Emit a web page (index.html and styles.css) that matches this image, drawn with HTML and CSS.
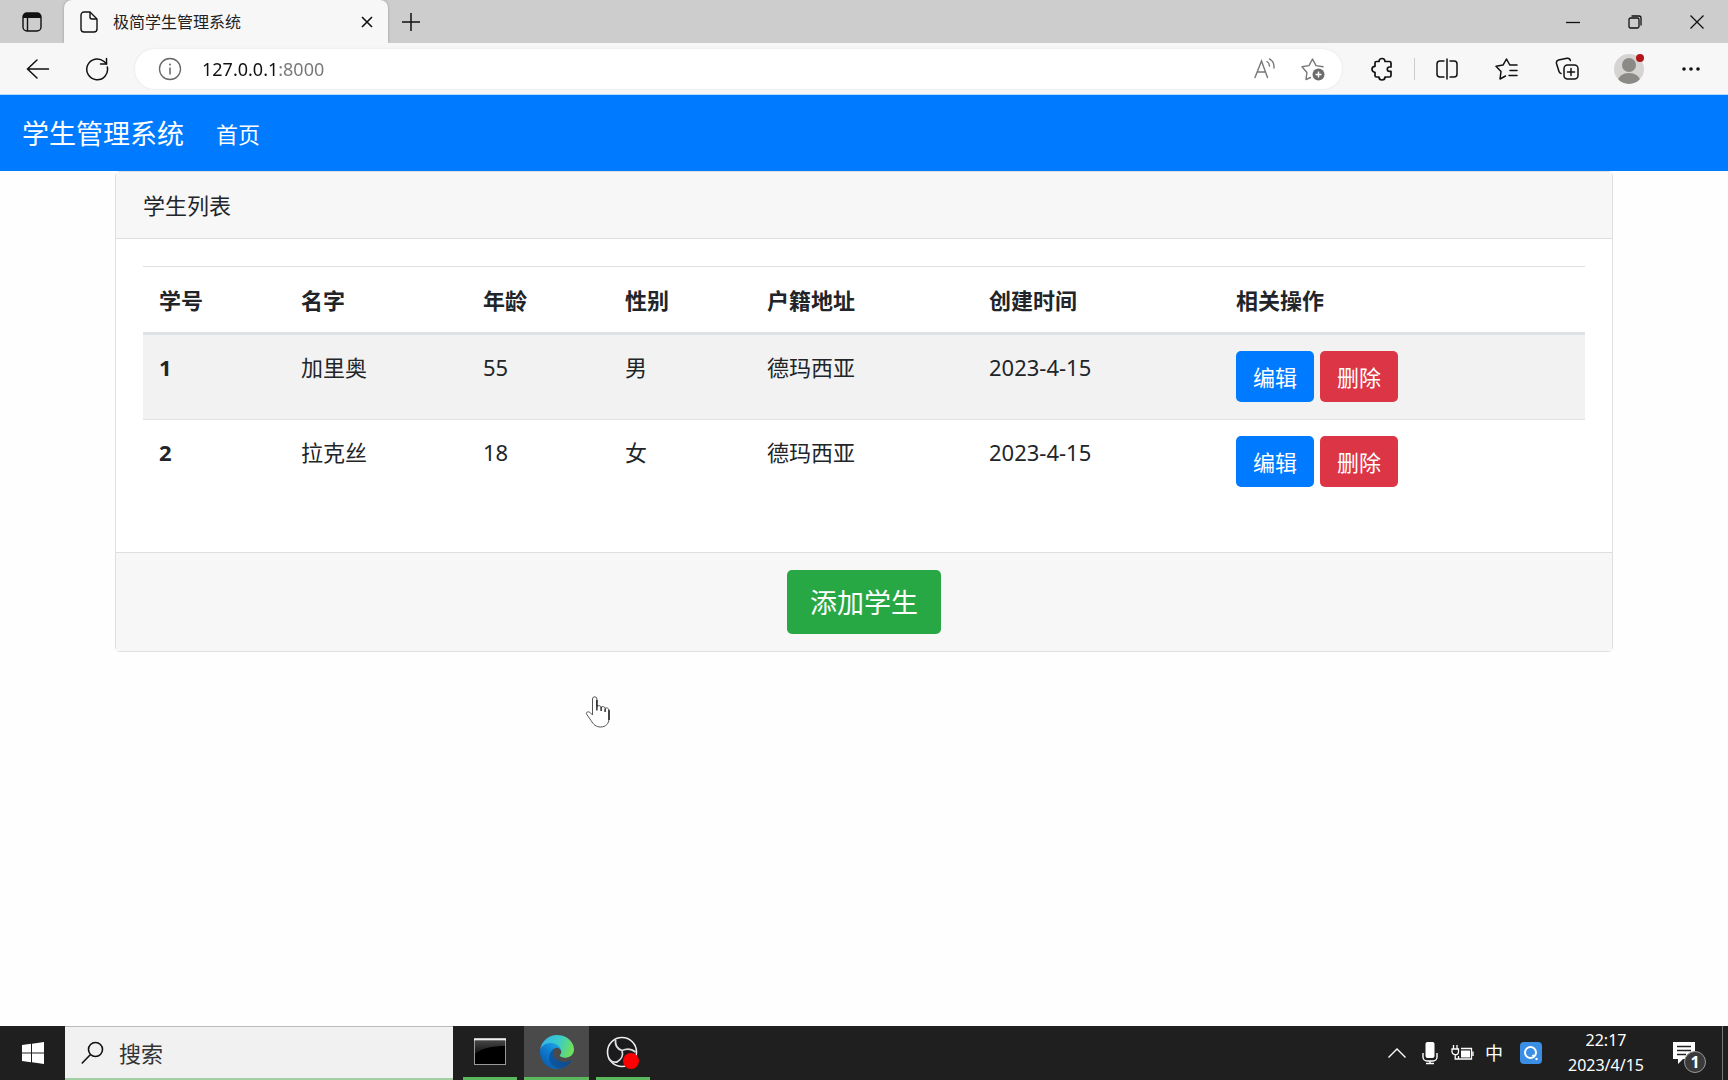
FILE: index.html
```html
<!DOCTYPE html>
<html lang="zh-CN">
<head>
<meta charset="utf-8">
<meta name="viewport" content="width=device-width, initial-scale=1">
<title>极简学生管理系统</title>
<link rel="stylesheet" href="styles.css">
</head>
<body>
<div class="tabstrip">
  <button class="tab-menu" aria-label="标签操作">
    <svg width="20" height="20" viewBox="0 0 20 20"><rect x="1" y="1" width="18" height="18" rx="4" fill="none" stroke="#111" stroke-width="1.4"/><path d="M1 6V5a4 4 0 0 1 4-4h10a4 4 0 0 1 4 4v1z" fill="#111"/><path d="M5.500 6v13" stroke="#111" stroke-width="1.400"/></svg>
  </button>
  <div class="tab">
    <svg width="18" height="22" viewBox="0 0 18 22" fill="none" stroke="#111" stroke-width="1.4" stroke-linejoin="round"><path d="M4 1h6l7 7v10a3 3 0 0 1-3 3H4a3 3 0 0 1-3-3V4a3 3 0 0 1 3-3z"/><path d="M10 1v5a2 2 0 0 0 2 2h5"/></svg>
    <span class="tab-title">极简学生管理系统</span>
    <button class="tab-close" aria-label="关闭标签页"><svg width="12" height="12" viewBox="0 0 12 12" stroke="#111" stroke-width="1.6"><path d="M1 1l10 10M11 1L1 11"/></svg></button>
  </div>
  <button class="tab-new" aria-label="新建标签页"><svg width="20" height="20" viewBox="0 0 20 20" stroke="#111" stroke-width="1.5"><path d="M10 1v18M1 10h18"/></svg></button>
  <div class="window-controls">
    <button aria-label="最小化"><svg width="14" height="14" viewBox="0 0 14 14" stroke="#111" stroke-width="1.3"><path d="M0 7.500h14"/></svg></button>
    <button aria-label="还原"><svg width="14" height="14" viewBox="0 0 14 14" fill="none" stroke="#111" stroke-width="1.300"><rect x="1" y="3" width="10" height="10" rx="1.500"/><path d="M3.500 1H11a2 2 0 0 1 2 2v7.500"/></svg></button>
    <button aria-label="关闭"><svg width="14" height="14" viewBox="0 0 14 14" stroke="#111" stroke-width="1.300"><path d="M.5.5l13 13M13.500.5l-13 13"/></svg></button>
  </div>
</div>

<div class="toolbar">
  <button class="tool-nav" aria-label="后退"><svg width="24" height="24" viewBox="0 0 24 24" fill="none" stroke="#111" stroke-width="1.500" stroke-linecap="round"><path d="M22.500 12H1.500M11 3l-9.500 9 9.500 9"/></svg></button>
  <button class="tool-nav" aria-label="刷新"><svg width="24" height="24" viewBox="0 0 24 24" fill="none" stroke="#111" stroke-width="1.500" stroke-linecap="round"><path d="M22.300 10A10.400 10.400 0 1 1 19 4.500l2.500 2.300"/><path d="M21.500 1.500v5.500h-6"/></svg></button>
  <div class="address">
    <svg width="24" height="24" viewBox="0 0 24 24" fill="none" stroke="#666" stroke-width="1.300"><circle cx="12" cy="12" r="10.500"/><path d="M12 10.500v7" stroke-width="1.500"/><circle cx="12" cy="7.500" r="1" fill="#666" stroke="none"/></svg>
    <input class="address-input" type="text" aria-label="地址栏" value="127.0.0.1:8000">
    <button aria-label="大声朗读"><svg width="24" height="24" viewBox="0 0 24 24" fill="none" stroke="#777" stroke-width="1.400" stroke-linecap="round"><path d="M2 20.500L8.500 4l6 16.500M4.300 15h8.300M14 4.500c1.700 1 2.500 2.500 2.500 4.500M16.500 2c3 1.500 4.800 4.500 4.500 9"/></svg></button>
    <button aria-label="收藏此页"><svg width="24" height="24" viewBox="0 0 24 24"><path d="M9.500 20.500L5 22.500l.9-7L1 9.800l7-1.200L11.500 2 15 8.600l7 1.200" fill="none" stroke="#777" stroke-width="1.400" stroke-linejoin="round" stroke-linecap="round"/><circle cx="17.500" cy="17.500" r="6" fill="#6b6b6b"/><path d="M17.500 14.500v6M14.500 17.500h6" stroke="#fff" stroke-width="1.500"/></svg></button>
  </div>
  <div class="tools">
    <button aria-label="扩展"><svg width="24" height="24" viewBox="0 0 24 24" fill="none" stroke="#111" stroke-width="1.700" stroke-linejoin="round"><path d="M9 4.500a3 3 0 0 1 6 0h4.500A1.500 1.500 0 0 1 21 6v4h-1.500a2.200 2.200 0 0 0 0 4.400H21v4.100a1.500 1.500 0 0 1-1.500 1.500H15a3 3 0 0 1-6 0H6.500A1.500 1.500 0 0 1 5 18.500V15.300a3 3 0 0 1 0-6V6a1.500 1.500 0 0 1 1.500-1.500z"/></svg></button>
    <span class="tool-divider"></span>
    <button aria-label="分屏"><svg width="24" height="24" viewBox="0 0 24 24" fill="none" stroke="#111" stroke-width="1.500"><path d="M9.500 4H5a3 3 0 0 0-3 3v10a3 3 0 0 0 3 3h4.500M14.500 4H19a3 3 0 0 1 3 3v10a3 3 0 0 1-3 3h-4.500M12 1.500v21"/></svg></button>
    <button aria-label="收藏夹"><svg width="24" height="24" viewBox="0 0 24 24" fill="none" stroke="#111" stroke-width="1.500" stroke-linejoin="round" stroke-linecap="round"><path d="M10.500 19L5 22l1-7.500L1 9.300l7-1.200L11.500 2l3.300 6H22M15 13.500h7M14 18.500h8"/></svg></button>
    <button aria-label="集锦"><svg width="24" height="24" viewBox="0 0 24 24" fill="none" stroke="#111" stroke-width="1.500" stroke-linecap="round"><rect x="9" y="8" width="14" height="14" rx="3.500"/><path d="M16 11.500v7M12.500 15h7M6 16.500a3 3 0 0 1-2-2L1.500 6.500A3 3 0 0 1 3.500 3L12 1.200a3 3 0 0 1 3.400 2.300"/></svg></button>
    <button class="profile" aria-label="个人资料"><svg width="32" height="32" viewBox="0 0 32 32"><defs><clipPath id="face"><circle cx="16" cy="16" r="15"/></clipPath></defs><circle cx="16" cy="16" r="15" fill="#d5d4d2"/><circle cx="16" cy="12" r="7" fill="#8b8a86"/><ellipse cx="16" cy="28" rx="11" ry="8" fill="#8b8a86" clip-path="url(#face)"/><circle cx="27" cy="5" r="4" fill="#b3161b"/></svg></button>
    <button aria-label="设置及其他"><svg width="24" height="24" viewBox="0 0 24 24" fill="#111"><circle cx="5" cy="12" r="1.800"/><circle cx="12" cy="12" r="1.800"/><circle cx="19" cy="12" r="1.800"/></svg></button>
  </div>
</div>

<nav class="navbar">
  <a class="navbar-brand" href="#">学生管理系统</a>
  <a class="navbar-link" href="#">首页</a>
</nav>

<main class="container">
  <section class="card">
    <div class="card-header">学生列表</div>
    <div class="card-body">
      <table class="table">
        <colgroup><col class="col-s"><col class="col-m"><col class="col-s"><col class="col-s"><col class="col-l"><col class="col-xl"><col></colgroup>
        <thead>
          <tr><th scope="col">学号</th><th scope="col">名字</th><th scope="col">年龄</th><th scope="col">性别</th><th scope="col">户籍地址</th><th scope="col">创建时间</th><th scope="col">相关操作</th></tr>
        </thead>
        <tbody>
          <tr>
            <th scope="row">1</th><td>加里奥</td><td>55</td><td>男</td><td>德玛西亚</td><td>2023-4-15</td>
            <td><div class="actions"><button class="btn btn-primary">编辑</button><button class="btn btn-danger">删除</button></div></td>
          </tr>
          <tr>
            <th scope="row">2</th><td>拉克丝</td><td>18</td><td>女</td><td>德玛西亚</td><td>2023-4-15</td>
            <td><div class="actions"><button class="btn btn-primary">编辑</button><button class="btn btn-danger">删除</button></div></td>
          </tr>
        </tbody>
      </table>
    </div>
    <div class="card-footer"><button class="btn btn-success btn-lg">添加学生</button></div>
  </section>
</main>

<svg class="pointer" width="26" height="34" viewBox="0 0 26 34"><path d="M7.500 20V4a2.200 2.200 0 0 1 4.400 0v7.500c1-1.500 4-1 4.200.8 1-1.200 3.800-.8 4 1 1.200-1 3.900-.2 3.900 2V23c0 6-3.500 9-8.500 9-4.500 0-7-2.500-9.500-6.500-1.500-2.400-3.300-4.500-4.500-6.500-.8-1.500 1.500-3 3.300-1.700z" fill="#fff" stroke="#555" stroke-width="1"/><path d="M11.900 5v10.500M16.100 12v4M20.100 13.500v3.500M24 15v10" stroke="#111" stroke-width="1.300"/></svg>

<footer class="taskbar">
  <button class="start" aria-label="开始"><svg width="22" height="22" viewBox="0 0 22 22" fill="#fff"><path d="M0 3l9-1.200v8.700H0zM10 1.700L22 0v10.500H10zM0 11.500h9v8.700L0 19zM10 11.500h12V22l-12-1.700z"/></svg></button>
  <label class="search">
    <svg width="24" height="24" viewBox="0 0 24 24" fill="none" stroke="#111" stroke-width="1.600"><circle cx="14.500" cy="8.500" r="7"/><path d="M9.500 13.500L.8 22.500"/></svg>
    <input class="search-input" type="text" placeholder="搜索" aria-label="搜索">
  </label>
  <div class="apps">
    <button class="app" aria-label="命令提示符"><svg width="32" height="27" viewBox="0 0 32 27"><defs><linearGradient id="shine" x1="0" y1="0" x2="0" y2="1"><stop offset="0" stop-color="#444"/><stop offset="1" stop-color="#111"/></linearGradient></defs><rect x=".5" y=".5" width="31" height="26" fill="#000" stroke="#999"/><path d="M1 3h30v5C18 8 8 10 1 16z" fill="url(#shine)"/><path d="M0 1.500h32" stroke="#eee" stroke-width="2"/></svg></button>
    <button class="app app-active" aria-label="Microsoft Edge"><svg width="34" height="34" viewBox="0 0 256 256"><defs>
      <linearGradient id="edge-a" x1="60" y1="177" x2="241" y2="177" gradientUnits="userSpaceOnUse"><stop offset="0" stop-color="#0c59a4"/><stop offset="1" stop-color="#114a8b"/></linearGradient>
      <linearGradient id="edge-b" x1="150" y1="100" x2="45" y2="210" gradientUnits="userSpaceOnUse"><stop offset="0" stop-color="#1b9de2"/><stop offset=".5" stop-color="#0f7fd0"/><stop offset="1" stop-color="#0a64b8"/></linearGradient>
      <linearGradient id="edge-c" x1="20" y1="60" x2="240" y2="140" gradientUnits="userSpaceOnUse"><stop offset="0" stop-color="#35b6e8"/><stop offset=".5" stop-color="#3bcbc8"/><stop offset="1" stop-color="#70e05b"/></linearGradient></defs>
      <g transform="translate(-4.630 -4.920)"><path fill="url(#edge-a)" d="M235.680 195.460a93.730 93.730 0 0 1-10.540 4.710 101.870 101.870 0 0 1-35.900 6.460c-47.320 0-88.540-32.550-88.540-74.320a31.480 31.480 0 0 1 16.430-27.310c-42.800 1.800-53.800 46.400-53.800 72.530 0 73.880 68.090 81.370 82.760 81.370 7.910 0 19.840-2.300 27-4.560l1.310-.44a128.340 128.340 0 0 0 66.600-53.160 4 4 0 0 0-5.320-5.280z"/><path fill="url(#edge-b)" d="M110.340 246.340A79.200 79.200 0 0 1 87.600 225a80.720 80.720 0 0 1 29.530-120c3.120-1.470 8.450-4.130 15.540-4a32.350 32.350 0 0 1 25.690 13 31.880 31.880 0 0 1 6.360 18.660c0-.21 24.460-79.600-80-79.600-43.900 0-80 41.660-80 78.210a130.150 130.150 0 0 0 12.110 56 128 128 0 0 0 156.380 67.110 75.550 75.550 0 0 1-62.780-8z"/><path fill="url(#edge-c)" d="M156.940 153.780c-.81 1.050-3.300 2.500-3.300 5.660 0 2.610 1.700 5.120 4.720 7.230 14.380 10 41.490 8.680 41.560 8.680a59.560 59.560 0 0 0 30.270-8.350 61.380 61.380 0 0 0 30.430-52.900c.26-22.410-8-37.310-11.340-43.910C228.090 28.760 182.350 4.920 132.610 4.920a128 128 0 0 0-128 126.200c.48-36.540 36.800-66.050 80-66.050 3.500 0 23.460.34 42 10.070 16.340 8.580 24.900 18.940 30.850 29.210 6.180 10.670 7.280 24.150 7.280 29.520 0 5.370-2.740 13.330-7.800 19.910z"/></g></svg></button>
    <button class="app" aria-label="OBS Studio"><svg width="34" height="34" viewBox="0 0 34 34" fill="none" stroke="#ddd"><circle cx="16" cy="17" r="14.500" fill="#1b1b1d" stroke="#eee" stroke-width="1.600"/><path d="M9.500 5c-.5 5 2 9 6.500 10.500 4.500-2 10-1.500 13.500 1.500M16 15.500c1.500 4.500-.5 9-5 11.500-3 .5-6-.5-8-3" stroke-width="1.800"/><circle cx="25" cy="26" r="8" fill="#f00" stroke="none"/></svg></button>
  </div>
  <div class="tray">
    <button aria-label="显示隐藏的图标"><svg width="20" height="20" viewBox="0 0 20 20" fill="none" stroke="#fff" stroke-width="1.400"><path d="M1.500 14.500L10 6l8.500 8.500"/></svg></button>
    <button aria-label="麦克风"><svg width="18" height="24" viewBox="0 0 18 24"><rect x="4.500" y="1" width="9" height="16" rx="2" fill="#fff"/><path d="M2 12v4a4 4 0 0 0 4 4h6a4 4 0 0 0 4-4v-4M9 20v3M5 22.500h8" fill="none" stroke="#fff" stroke-width="1.400"/></svg></button>
    <button aria-label="电源"><svg width="24" height="20" viewBox="0 0 24 20" fill="none" stroke="#fff" stroke-width="1.300"><path d="M10 5.500h10.500v10.500H7.500v-3M22 8.500v4.500M2.500 2v4M6 2v4M1 6h6.500v2.500a3.200 3.200 0 0 1-6.500 0zM4.200 12v4h4"/><path d="M10 7.500h9v7h-9z" fill="#fff" stroke="none"/></svg></button>
    <button class="ime">中</button>
    <button aria-label="搜索助手"><svg width="22" height="22" viewBox="0 0 22 22"><rect width="22" height="22" rx="4" fill="#3a8ee6"/><circle cx="10.500" cy="10.500" r="5.500" fill="none" stroke="#fff" stroke-width="2"/><path d="M12.500 13l2 2" stroke="#fff" stroke-width="1.800"/><circle cx="16.500" cy="17" r="1.200" fill="#fff"/></svg></button>
    <button class="clock"><time>22:17</time><span>2023/4/15</span></button>
    <button class="notice" aria-label="通知"><svg width="22" height="22" viewBox="0 0 22 22"><path d="M0 0h22v17H10l-5 5v-5H0z" fill="#fff"/><path d="M4 4.500h14M4 8.500h14M4 12.500h9" stroke="#222" stroke-width="1.600"/></svg><span class="badge">1</span></button>
    <button class="show-desktop" aria-label="显示桌面"></button>
  </div>
</footer>
</body>
</html>
```
FILE: styles.css
```css
* {
  box-sizing: border-box;
}

body {
  margin: 0;
  min-height: 100vh;
  display: flex;
  flex-direction: column;
  background: #fefefe;
  color: #212529;
  font: 400 22px/32px "Noto Sans", "Noto Sans CJK SC", sans-serif;
}

button,
input {
  margin: 0;
  padding: 0;
  border: 0;
  background: none;
  color: inherit;
  font: inherit;
}

button {
  display: flex;
  align-items: center;
  justify-content: center;
}

svg {
  display: block;
  flex: none;
}

a {
  color: inherit;
  text-decoration: none;
}

/* Tab strip */
.tabstrip {
  display: flex;
  height: 43px;
  background: #cdcdcd;
}

.tab-menu {
  width: 64px;
}

.tab {
  display: flex;
  align-items: center;
  width: 324px;
  padding: 0 14px 0 16px;
  border-radius: 8px 8px 0 0;
  background: #f7f7f7;
  box-shadow: 0 0 3px #999;
  clip-path: inset(0 -3px);
}

.tab-title {
  flex: 1;
  padding-left: 15px;
  color: #222;
  font-size: 16px;
  line-height: 24px;
}

.tab-close {
  width: 14px;
  height: 24px;
}

.tab-new {
  width: 46px;
}

.window-controls {
  display: flex;
  margin-left: auto;
}

.window-controls button {
  width: 62px;
}

/* Toolbar */
.toolbar {
  display: flex;
  align-items: center;
  height: 52px;
  padding: 0 8px;
  border-bottom: 1px solid #b5dafa;
  background: #f7f7f7;
}

.tool-nav {
  width: 59px;
  height: 40px;
}

.address {
  flex: 1;
  display: flex;
  align-items: center;
  height: 40px;
  margin-left: 9px;
  padding: 0 17px 0 23px;
  border-radius: 20px;
  background: #fff;
  box-shadow: 0 0 3px #e4e4e4;
}

.address-input {
  flex: 1;
  min-width: 0;
  padding-left: 20px;
  background: linear-gradient(to right, #111 95px, #777 95px);
  background-clip: text;
  -webkit-text-fill-color: transparent;
  font-size: 18px;
  line-height: 24px;
}

.address button {
  margin-left: 24px;
}

.tools {
  display: flex;
  align-items: center;
  padding: 0 15px 0 26px;
}

.tools button {
  width: 28px;
  margin-right: 32px;
}

.tools button:last-child {
  margin-right: 0;
}

.tools .profile {
  width: 32px;
  margin: 0 32px 0 0;
}

.tool-divider {
  width: 1px;
  height: 22px;
  margin: 0 18px 0 -14px;
  background: #ccc;
}

/* Site navigation */
.navbar {
  display: flex;
  align-items: center;
  gap: 32px;
  height: 76px;
  padding: 2px 22px 0;
  background: #007bff;
  color: #fff;
}

.navbar-brand {
  font-size: 27px;
}

/* Student list */
.container {
  flex: 1;
  width: 100%;
  max-width: 1540px;
  margin: 0 auto;
  padding: 0 21px;
}

.card {
  border: 1px solid #dfdfdf;
  border-radius: 5px;
  background: #fff;
}

.card-header {
  padding: 17px 27px;
  border-bottom: 1px solid #dfdfdf;
  background: #f7f7f7;
}

.card-body {
  padding: 27px;
}

.table {
  width: 100%;
  margin-bottom: 21px;
  border-spacing: 0;
  table-layout: fixed;
}

.col-s {
  width: 142px;
}

.col-m {
  width: 182px;
}

.col-l {
  width: 222px;
}

.col-xl {
  width: 247px;
}

.table th,
.table td {
  padding: 16px 16px 17px;
  border-top: 1px solid #dee2e6;
  text-align: left;
  vertical-align: top;
}

.table thead th {
  padding: 17px 16px 16px;
  border-bottom: 2px solid #dee2e6;
}

.table tbody tr:nth-child(odd) {
  background: #f2f2f2;
}

.actions {
  display: flex;
  gap: 6px;
}

.btn {
  padding: 10px 17px 9px;
  border-radius: 5px;
  color: #fff;
}

.btn-primary {
  background: #007bff;
}

.btn-danger {
  background: #dc3545;
}

.btn-success {
  background: #28a745;
}

.btn-lg {
  padding: 17px 23px 15px;
  font-size: 27px;
}

.card-footer {
  display: flex;
  justify-content: center;
  padding: 17px;
  border-top: 1px solid #dfdfdf;
  background: #f7f7f7;
}

.pointer {
  position: absolute;
  left: 585px;
  top: 695px;
}

/* Taskbar */
.taskbar {
  display: flex;
  height: 54px;
  background: #1f1f1f;
  color: #fff;
}

.start {
  width: 65px;
}

.search {
  display: flex;
  align-items: center;
  gap: 14px;
  width: 388px;
  padding: 0 16px;
  border-top: 1px solid #bbb;
  border-bottom: 2px solid #a3cda3;
  background: #f1f1f1;
  color: #333;
}

.search-input {
  flex: 1;
  min-width: 0;
}

.search-input::placeholder {
  color: #333;
  opacity: 1;
}

.apps {
  display: flex;
  gap: 7px;
  padding-left: 10px;
}

.app {
  width: 54px;
  border-bottom: 3px solid #5cb85c;
}

.app-active {
  width: 65px;
  background: #4a4a4a;
}

.tray {
  display: flex;
  margin-left: auto;
}

.tray button {
  width: 33px;
}

.tray .ime {
  width: 30px;
  font-size: 18px;
}

.tray .ime + button {
  width: 44px;
}

.tray button.clock {
  flex-direction: column;
  width: 106px;
  font-size: 16px;
  line-height: 25px;
}

.tray button.notice {
  position: relative;
  width: 50px;
}

.badge {
  position: absolute;
  left: 25px;
  top: 25px;
  width: 22px;
  height: 22px;
  border: 1px solid #999;
  border-radius: 50%;
  background: #3a3a3a;
  font-size: 16px;
  font-weight: 700;
  line-height: 20px;
}

.tray button.show-desktop {
  width: 6px;
  margin-left: 13px;
  border-left: 1px solid #777;
}
```
